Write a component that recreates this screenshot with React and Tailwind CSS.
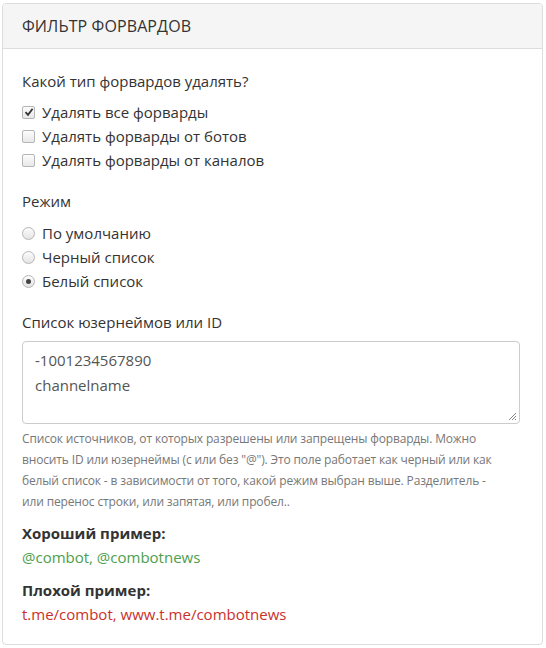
import React from "react";

function Check({ checked }) {
  return (
    <span className="w-[13px] h-[13px] rounded-[2px] border border-[#b5b5b5] bg-gradient-to-b from-[#fcfcfc] to-[#e8e8e8] flex items-center justify-center shrink-0">
      {checked && (
        <svg width="10" height="10" viewBox="0 0 10 10">
          <path d="M1.5 5.2 L4 7.8 L8.6 1.8" fill="none" stroke="#333" strokeWidth="1.8" />
        </svg>
      )}
    </span>
  );
}

function Radio({ checked }) {
  return (
    <span className="w-[13px] h-[13px] rounded-full border border-[#b5b5b5] bg-gradient-to-b from-[#fcfcfc] to-[#e4e4e4] flex items-center justify-center shrink-0">
      {checked && <span className="w-[5px] h-[5px] rounded-full bg-[#444]" />}
    </span>
  );
}

export default function App() {
  return (
    <div className="w-[546px] h-[648px] bg-white pt-[3px] px-[2px] font-['Open_Sans',sans-serif] text-[#333]">
      <div className="border border-[#ddd] rounded-[4px] h-[642px] w-[541px] overflow-hidden">
        <div className="bg-[#f5f5f5] border-b border-[#ddd] h-[45px] flex items-center px-[19px] text-[16px] tracking-[0.1px]">
          ФИЛЬТР ФОРВАРДОВ
        </div>
        <div className="px-[19px] pt-[20px]">
          <div className="text-[15px] leading-[24px]">Какой тип форвардов удалять?</div>
          <div className="mt-[7px] flex flex-col">
            {[
              ["Удалять все форварды", true],
              ["Удалять форварды от ботов", false],
              ["Удалять форварды от каналов", false],
            ].map(([t, c]) => (
              <label key={t} className="flex items-center gap-[7px] h-[24px] text-[15px]">
                <Check checked={c} />
                <span>{t}</span>
              </label>
            ))}
          </div>
          <div className="mt-[17px] text-[15px] leading-[24px]">Режим</div>
          <div className="mt-[8px] flex flex-col">
            {[
              ["По умолчанию", false],
              ["Черный список", false],
              ["Белый список", true],
            ].map(([t, c]) => (
              <label key={t} className="flex items-center gap-[7px] h-[24px] text-[15px]">
                <Radio checked={c} />
                <span>{t}</span>
              </label>
            ))}
          </div>
          <div className="mt-[17px] text-[15px] leading-[24px]">Список юзернеймов или ID</div>
          <div className="mt-[7px] relative w-[498px] h-[83px] border border-[#ccc] rounded-[4px] px-[12px] pt-[6px] text-[15px] leading-[25px] text-[#555]">
            <div>-1001234567890</div>
            <div>channelname</div>
            <svg className="absolute right-[2px] bottom-[2px]" width="9" height="9" viewBox="0 0 9 9">
              <path d="M8 1 L1 8 M8 4 L4 8 M8 7 L7 8" stroke="#888" strokeWidth="1" />
            </svg>
          </div>
          <p className="mt-[4px] text-[12px] tracking-[-0.15px] leading-[21px] text-[#777] w-[488px]">
            Список источников, от которых разрешены или запрещены форварды. Можно вносить ID или юзернеймы (с или без "@"). Это поле работает как черный или как белый список - в зависимости от того, какой режим выбран выше. Разделитель - или перенос строки, или запятая, или пробел..
          </p>
          <div className="mt-[9px] text-[15px] font-bold leading-[24px]">Хороший пример:</div>
          <div className="text-[15px] leading-[24px] text-[#4d9e4d]">@combot, @combotnews</div>
          <div className="mt-[9px] text-[15px] font-bold leading-[24px]">Плохой пример:</div>
          <div className="text-[15px] leading-[24px] text-[#c9302c]">t.me/combot, www.t.me/combotnews</div>
        </div>
      </div>
    </div>
  );
}
